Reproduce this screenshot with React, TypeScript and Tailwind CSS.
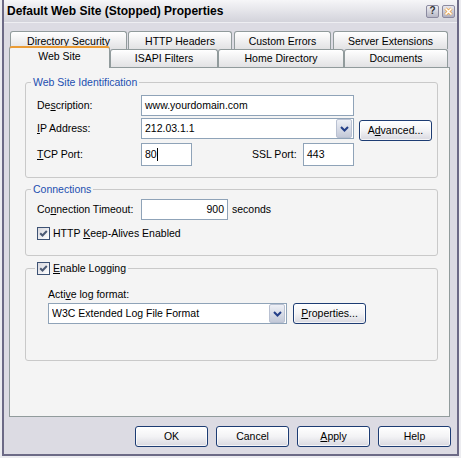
import React from 'react';

function U({ children }: { children: React.ReactNode }) {
  return <span className="underline underline-offset-[1px] decoration-1">{children}</span>;
}

function XPButton({ children, className = '' }: { children: React.ReactNode; className?: string }) {
  return (
    <div
      className={`flex items-center justify-center w-[73px] h-[21px] rounded-[3px] border border-[#1d3c73] bg-linear-to-b from-white via-[#f3f3f5] to-[#d8d8e0] shadow-[inset_0_0_0_1px_rgba(255,255,255,0.7)] ${className}`}
    >
      {children}
    </div>
  );
}

function DropBtn() {
  return (
    <div className="w-[16px] h-[19px] flex items-center justify-center border border-[#b9c1d2] rounded-[2px] bg-linear-to-b from-[#eef0f6] to-[#c3c9d8]">
      <svg width="9" height="6" viewBox="0 0 9 6">
        <path d="M1 1 L4.5 4.5 L8 1" stroke="#243f88" strokeWidth="2" fill="none" />
      </svg>
    </div>
  );
}

function Combo({ width, text }: { width: string; text: string }) {
  return (
    <div className={`${width} h-[21px] border border-[#8fa3b8] bg-white flex items-center pl-[3px] pr-[1px]`}>
      <span className="flex-1 truncate">{text}</span>
      <DropBtn />
    </div>
  );
}

function Check() {
  return (
    <div className="w-[13px] h-[13px] shrink-0 border border-[#3d5274] bg-linear-to-br from-[#d8d8de] to-white flex items-center justify-center">
      <svg width="9" height="9" viewBox="0 0 9 9">
        <path d="M1.2 4.2 L3.5 6.5 L7.8 2" stroke="#4c5a74" strokeWidth="2" fill="none" />
      </svg>
    </div>
  );
}

function BackTab({ w, ml, children }: { w: string; ml: string; children: React.ReactNode }) {
  return (
    <div
      className={`${w} ${ml} h-[18px] flex justify-center pt-[3px] border-x border-t border-[#919b9c] rounded-t-[3px] bg-linear-to-b from-white to-[#e2e2e4]`}
    >
      {children}
    </div>
  );
}

function FrontTab({ w, children }: { w: string; children: React.ReactNode }) {
  return (
    <div
      className={`${w} mt-[3px] h-[18px] flex justify-center pt-[2px] border-x border-t border-[#919b9c] rounded-t-[3px] bg-linear-to-b from-white to-[#e2e2e4]`}
    >
      {children}
    </div>
  );
}

export default function App() {
  return (
    <div className="w-[461px] h-[458px] bg-[#ececf0] pl-[2px] font-['Liberation_Sans',Arial,sans-serif] text-[10.5px] leading-[13px] text-black">
      <div className="w-[457px] h-[456px] border-x-2 border-b-2 border-[#6c6a86] bg-[#dcdbe3] flex flex-col">
        {/* Title bar */}
        <div className="h-[23px] flex items-center pl-[3px] pr-[2px] bg-linear-to-b from-[#f6f6f8] to-[#d3d3db] border-b border-[#eeeef2]">
          <span className="flex-1 font-bold text-[12px]">Default Web Site (Stopped) Properties</span>
          <div className="w-[13px] h-[13px] rounded-[2px] border border-[#8b8aa0] bg-linear-to-b from-[#f0f0f4] to-[#b8b8c6] flex items-center justify-center text-[10px] font-bold leading-none text-[#333]">
            ?
          </div>
          <div className="ml-[3px] w-[13px] h-[13px] rounded-[2px] border border-[#8b8aa0] bg-linear-to-b from-[#e8e8ee] to-[#b0b0c0] flex items-center justify-center">
            <svg width="9" height="9" viewBox="0 0 9 9">
              <path d="M1.5 1.5 L7.5 7.5 M7.5 1.5 L1.5 7.5" stroke="#f2a33a" strokeWidth="3" />
              <path d="M1.5 1.5 L7.5 7.5 M7.5 1.5 L1.5 7.5" stroke="white" strokeWidth="1.6" />
            </svg>
          </div>
        </div>

        {/* Back tab row */}
        <div className="mt-[8px] ml-[6px] flex h-[18px]">
          <BackTab w="w-[117px]" ml="ml-0">Directory Security</BackTab>
          <BackTab w="w-[104px]" ml="ml-[1px]">HTTP Headers</BackTab>
          <BackTab w="w-[97px]" ml="ml-[2px]">Custom Errors</BackTab>
          <BackTab w="w-[115px]" ml="ml-[2px]">Server Extensions</BackTab>
        </div>

        {/* Front tab row */}
        <div className="-mt-[3px] ml-[5px] flex items-start h-[21px] relative z-10">
          <div className="w-[101px] h-[22px] flex justify-center pt-[2px] border-x border-[#919b9c] border-t-2 border-t-[#eb9c36] rounded-t-[3px] bg-[#f4f4f4]">
            Web Site
          </div>
          <FrontTab w="w-[108px]">ISAPI Filters</FrontTab>
          <FrontTab w="w-[126px]">Home Directory</FrontTab>
          <FrontTab w="w-[104px]">Documents</FrontTab>
        </div>

        {/* Panel */}
        <div className="ml-[5px] w-[441px] h-[350px] border border-[#919b9c] bg-[#f4f4f4] flex flex-col">
          {/* Group 1 */}
          <div className="relative mt-[14px] ml-[15px] w-[413px] h-[96px] border border-[#c9c9c9] rounded-[3px] pt-[12px] pl-[11px]">
            <span className="absolute left-[5px] -top-[7px] px-[2px] bg-[#f4f4f4] text-[#1c4fb0]">
              Web Site Identification
            </span>
            <div className="flex items-center h-[21px]">
              <span className="w-[104px]">
                De<U>s</U>cription:
              </span>
              <div className="w-[213px] h-[21px] border border-[#8fa3b8] bg-white flex items-center pl-[3px]">
                www.yourdomain.com
              </div>
            </div>
            <div className="mt-[2px] flex items-start h-[21px]">
              <span className="w-[104px] leading-[21px]">
                <U>I</U>P Address:
              </span>
              <Combo width="w-[213px]" text="212.03.1.1" />
              <XPButton className="ml-[5px] mt-[2px]">
                <span>
                  A<U>d</U>vanced...
                </span>
              </XPButton>
            </div>
            <div className="mt-[4px] flex items-center h-[23px]">
              <span className="w-[104px]">
                <U>T</U>CP Port:
              </span>
              <div className="w-[51px] h-[23px] border border-[#8fa3b8] bg-white flex items-center pl-[3px]">
                80
                <span className="inline-block w-px h-[13px] bg-black" />
              </div>
              <span className="ml-[60px] w-[51px]">SSL Port:</span>
              <div className="w-[51px] h-[23px] border border-[#8fa3b8] bg-white flex items-center pl-[3px]">
                443
              </div>
            </div>
          </div>

          {/* Group 2 */}
          <div className="relative mt-[11px] ml-[15px] w-[413px] h-[67px] border border-[#c9c9c9] rounded-[3px] pt-[9px] pl-[11px]">
            <span className="absolute left-[5px] -top-[7px] px-[2px] bg-[#f4f4f4] text-[#1c4fb0]">Connections</span>
            <div className="flex items-center h-[21px]">
              <span className="w-[104px]">
                Co<U>n</U>nection Timeout:
              </span>
              <div className="w-[87px] h-[21px] border border-[#8fa3b8] bg-white flex items-center justify-end pr-[3px]">
                900
              </div>
              <span className="ml-[4px]">seconds</span>
            </div>
            <div className="mt-[7px] flex items-center">
              <Check />
              <span className="ml-[3px]">
                HTTP <U>K</U>eep-Alives Enabled
              </span>
            </div>
          </div>

          {/* Group 3 */}
          <div className="relative mt-[12px] ml-[15px] w-[413px] h-[93px] border border-[#c9c9c9] rounded-[3px] pt-[19px] pl-[22px]">
            <div className="absolute left-[9px] -top-[7px] px-[2px] bg-[#f4f4f4] flex items-center">
              <Check />
              <span className="ml-[3px]">
                <U>E</U>nable Logging
              </span>
            </div>
            <div>
              Acti<U>v</U>e log format:
            </div>
            <div className="mt-[2px] flex items-center">
              <Combo width="w-[239px]" text="W3C Extended Log File Format" />
              <XPButton className="ml-[6px] -mt-[1px]">
                <span>
                  <U>P</U>roperties...
                </span>
              </XPButton>
            </div>
          </div>
        </div>

        {/* Bottom buttons */}
        <div className="mt-[9px] flex justify-end pr-[6px] gap-[8px]">
          <XPButton>OK</XPButton>
          <XPButton>Cancel</XPButton>
          <XPButton>
            <span>
              <U>A</U>pply
            </span>
          </XPButton>
          <XPButton>Help</XPButton>
        </div>
      </div>
    </div>
  );
}
